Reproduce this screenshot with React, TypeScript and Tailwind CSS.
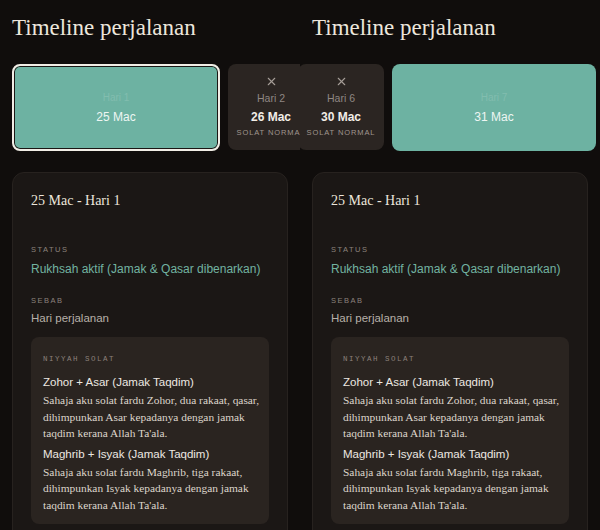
import React, { useLayoutEffect, useRef } from 'react';
import { X } from 'lucide-react';

type Day = { hari: number; tarikh: string; travel: boolean };

const days: Day[] = [
  { hari: 1, tarikh: '25 Mac', travel: true },
  { hari: 2, tarikh: '26 Mac', travel: false },
  { hari: 3, tarikh: '27 Mac', travel: false },
  { hari: 4, tarikh: '28 Mac', travel: false },
  { hari: 5, tarikh: '29 Mac', travel: false },
  { hari: 6, tarikh: '30 Mac', travel: false },
  { hari: 7, tarikh: '31 Mac', travel: true },
];

const serif = { fontFamily: '"Liberation Serif", "DejaVu Serif", serif' };
const sans = { fontFamily: '"Liberation Sans", Arial, sans-serif' };
const mono = { fontFamily: '"Liberation Mono", "DejaVu Sans Mono", monospace' };

const DayTile: React.FC<{ day: Day; selected: boolean }> = ({ day, selected }) => {
  if (day.travel) {
    return (
      <div
        className={`flex h-[87px] flex-shrink-0 flex-col items-center justify-center rounded-lg bg-[#6db2a2] ${
          selected ? 'w-[208px] border-2 border-[#f1ede6] shadow-[inset_0_0_0_1px_#1b1715]' : 'w-[204px]'
        }`}
      >
        <p className="text-[10px] leading-[14px] text-[#82bdaf]">Hari {day.hari}</p>
        <p className="mt-1 text-[12px] leading-[16px] text-[#eef6f3]">{day.tarikh}</p>
      </div>
    );
  }
  return (
    <div className="flex h-[86px] w-[86px] flex-shrink-0 flex-col items-center justify-center rounded-lg bg-[#2b2522]">
      <X className="h-[13px] w-[13px] text-[#a69e98]" strokeWidth={2} />
      <p className="mt-[3px] text-[10.5px] leading-[14px] text-[#8f8782]">Hari {day.hari}</p>
      <p className="mt-1 text-[12px] font-semibold leading-[16px] text-[#f2ede7]">{day.tarikh}</p>
      <p className="mt-[2px] text-[7.5px] uppercase leading-[12px] tracking-[0.12em] text-[#a0968f]">Solat normal</p>
    </div>
  );
};

const Timeline: React.FC<{ scroll: number }> = ({ scroll }) => {
  const strip = useRef<HTMLDivElement>(null);

  useLayoutEffect(() => {
    if (strip.current) strip.current.scrollLeft = scroll;
  }, [scroll]);

  return (
    <div className="h-[530px] w-[300px] flex-shrink-0 overflow-hidden pt-3" style={sans}>
      <h1 className="px-3 text-[23px] leading-[32px] text-[#ece6dc]" style={serif}>
        Timeline perjalanan
      </h1>

      <div ref={strip} className="mt-5 flex gap-2 overflow-x-auto px-3 [scrollbar-width:none]">
        {days.map((d) => (
          <DayTile key={d.hari} day={d} selected={d.hari === 1} />
        ))}
      </div>

      <div className="mx-3 mt-[21px] rounded-xl border border-[#27221f] bg-[#1b1715] px-[18px] pb-6 pt-[18px]">
        <h2 className="text-[14px] leading-[20px] text-[#ece6dc]" style={serif}>
          25 Mac - Hari 1
        </h2>

        <p className="mt-[33px] text-[7.5px] uppercase leading-[12px] tracking-[0.2em] text-[#8b827c]">Status</p>
        <p className="mt-1 text-[12px] leading-[18px] text-[#72b3a1]">Rukhsah aktif (Jamak &amp; Qasar dibenarkan)</p>

        <p className="mt-[17px] text-[7.5px] uppercase leading-[12px] tracking-[0.2em] text-[#8b827c]">Sebab</p>
        <p className="mt-[2px] text-[11.5px] leading-[18px] text-[#b8b0a9]">Hari perjalanan</p>

        <div className="mt-[10px] rounded-lg bg-[#2a2420] pb-[11px] pl-3 pr-2 pt-4">
          <p className="text-[7.5px] uppercase leading-[12px] tracking-[0.2em] text-[#8c817b]" style={mono}>
            Niyyah solat
          </p>

          <p className="mt-2 text-[11.5px] leading-[18px] text-[#ede8e2]">Zohor + Asar (Jamak Taqdim)</p>
          <p className="mt-[1px] text-[11.4px] leading-[16.5px] text-[#ddd5cb]" style={serif}>
            Sahaja aku solat fardu Zohor, dua rakaat, qasar, dihimpunkan Asar kepadanya dengan jamak taqdim kerana
            Allah Ta'ala.
          </p>

          <p className="mt-[3px] text-[11.5px] leading-[18px] text-[#ede8e2]">Maghrib + Isyak (Jamak Taqdim)</p>
          <p className="mt-[1px] text-[11.4px] leading-[16.5px] text-[#ddd5cb]" style={serif}>
            Sahaja aku solat fardu Maghrib, tiga rakaat, dihimpunkan Isyak kepadanya dengan jamak taqdim kerana
            Allah Ta'ala.
          </p>
        </div>
      </div>
    </div>
  );
};

export default function App() {
  return (
    <div className="flex h-[530px] w-[600px] overflow-hidden bg-[#100d0c]">
      <Timeline scroll={0} />
      <Timeline scroll={606} />
    </div>
  );
}
